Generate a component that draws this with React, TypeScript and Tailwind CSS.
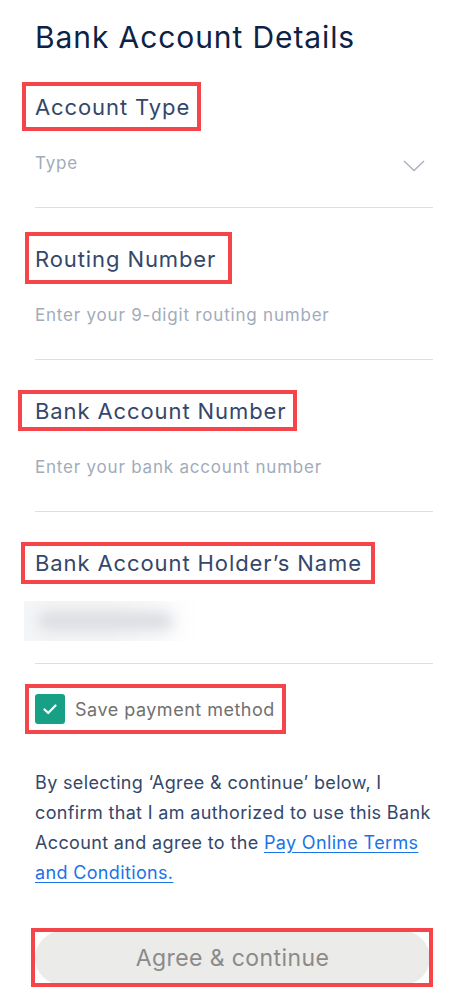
import { ReactNode } from 'react';

const FONT = "font-['Inter','Open_Sans',sans-serif]";

type MarkProps = { children: ReactNode; box: string };

// red review outline laid over a piece of the form
const Marked = ({ children, box }: MarkProps) => (
    <div className="relative self-start w-fit">
        {children}
        <span className={`pointer-events-none absolute border-[4px] border-[#f6454a] ${box}`} />
    </div>
);

const Field = ({ label, box, children }: { label: string; box: string; children: ReactNode }) => (
    <div className="flex flex-col mt-[35px]">
        <Marked box={box}>
            <label className="block h-[32px] leading-[32px] text-[22px] text-[#34476a] tracking-[0.9px]">{label}</label>
        </Marked>
        <div className="relative h-[85px] border-b border-[#dcdfe5]">{children}</div>
    </div>
);

const Placeholder = ({ text }: { text: string }) => (
    <div className="pt-[28px] leading-[24px] text-[17px] tracking-[0.8px] text-[#a2abba]">{text}</div>
);

const App = () => {
    return (
        <div className={`${FONT} bg-white w-full min-h-[1008px] pl-[35px] pr-[24px] pt-[19px] pb-[20px]`}>
            <h1 className="h-[37px] leading-[36px] text-[30px] tracking-[0.9px] text-[#0e2245] font-normal">Bank Account Details</h1>

            <Field label="Account Type" box="-left-[13px] -top-[9px] w-[179px] h-[49px]">
                <div className="flex items-start justify-between">
                    <Placeholder text="Type" />
                    <svg className="mt-[37px] mr-[8px]" width="22" height="12" viewBox="0 0 22 12" fill="none">
                        <polyline points="1,1 11,10.5 21,1" stroke="#a9b0be" strokeWidth="1.4" />
                    </svg>
                </div>
            </Field>

            <Field label="Routing Number" box="-left-[10px] -top-[11px] w-[207px] h-[52px]">
                <Placeholder text="Enter your 9-digit routing number" />
            </Field>

            <Field label="Bank Account Number" box="-left-[17px] -top-[5px] w-[279px] h-[41px]">
                <Placeholder text="Enter your bank account number" />
            </Field>

            <Field label="Bank Account Holder’s Name" box="-left-[14px] -top-[5px] w-[354px] h-[42px]">
                {/* holder name is blurred out in the source */}
                <div className="pt-[22px] -ml-[11px]">
                    <div className="relative w-[175px] h-[40px] overflow-hidden bg-gradient-to-r from-[#f4f5f6] via-[#f4f5f6] to-white">
                        <div className="absolute left-[14px] top-[11px] w-[135px] h-[18px] rounded-full bg-[#d9dce1] blur-[7px]" />
                    </div>
                </div>
            </Field>

            <div className="mt-[30px]">
                <Marked box="-left-[10px] -top-[10px] w-[261px] h-[50px]">
                    <div className="flex items-center gap-[10px] h-[30px]">
                        <span className="flex items-center justify-center w-[30px] h-[30px] rounded-[3px] bg-[#17a086]">
                            <svg width="14" height="11" viewBox="0 0 14 11" fill="none">
                                <polyline points="1.5,5.5 5.2,9 12.5,1.5" stroke="#fff" strokeWidth="2.2" strokeLinecap="round" strokeLinejoin="round" />
                            </svg>
                        </span>
                        <span className="text-[18px] tracking-[0.5px] text-[#707070]">Save payment method</span>
                    </div>
                </Marked>
            </div>

            <p className="mt-[44px] whitespace-nowrap text-[18px] leading-[30px] tracking-[0.35px] text-[#34476a]">
                By selecting ‘Agree &amp; continue’ below, I<br />
                confirm that I am authorized to use this Bank<br />
                Account and agree to the{' '}
                <a href="#" className="text-[#1a73e8] underline underline-offset-[3px]">
                    Pay Online Terms<br />
                    and Conditions.
                </a>
            </p>

            <div className="mt-[43px]">
                <div className="relative">
                    <button className="block w-[395px] h-[54px] rounded-full bg-[#ebebea] text-[23px] tracking-[0.4px] text-[#8a8a8a]">
                        Agree &amp; continue
                    </button>
                    <span className="pointer-events-none absolute border-[4px] border-[#f6454a] -left-[4px] -top-[3px] w-[402px] h-[59px]" />
                </div>
            </div>
        </div>
    );
};

export default App;
